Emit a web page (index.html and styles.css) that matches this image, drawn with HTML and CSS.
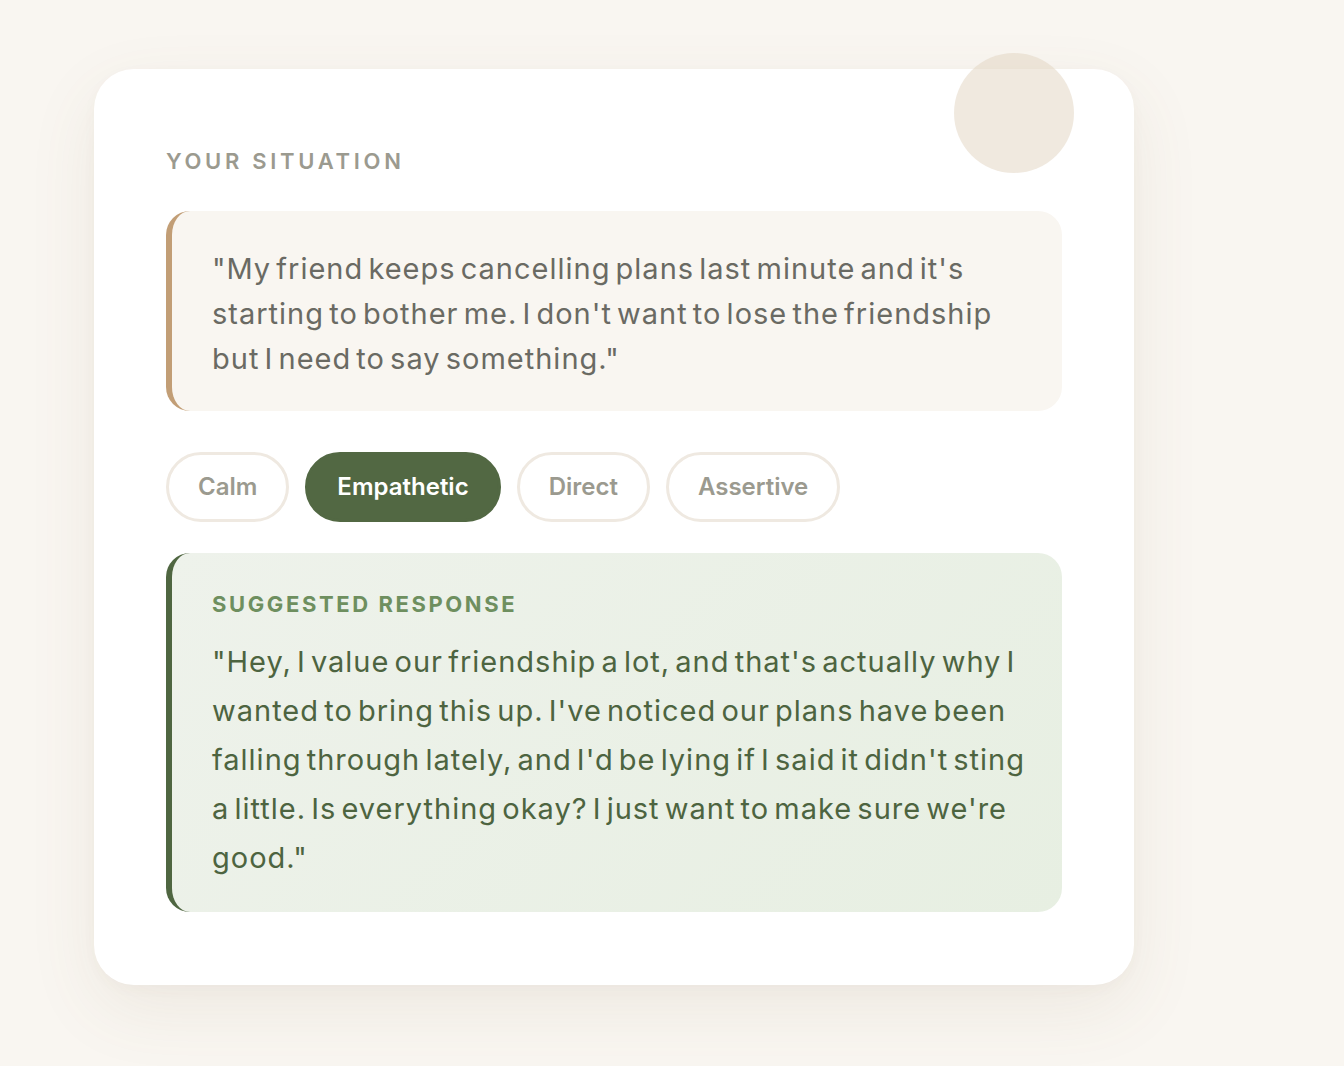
FILE: index.html
```html
<!DOCTYPE html>
<html lang="en">
<head>
<meta charset="utf-8">
<title>Your situation</title>
<link rel="stylesheet" href="styles.css">
</head>
<body>
<main class="page">
  <section class="card">
    <div class="card-dot" aria-hidden="true"></div>
    <h2 class="eyebrow">Your situation</h2>
    <blockquote class="situation">"My friend keeps cancelling plans last minute and it's starting to bother me. I don't want to lose the friendship but I need to say something."</blockquote>
    <div class="tones">
      <button class="tone">Calm</button>
      <button class="tone tone-active">Empathetic</button>
      <button class="tone">Direct</button>
      <button class="tone">Assertive</button>
    </div>
    <div class="response">
      <h3 class="response-label">Suggested response</h3>
      <p class="response-text">"Hey, I value our friendship a lot, and that's actually why I wanted to bring this up. I've noticed our plans have been falling through lately, and I'd be lying if I said it didn't sting a little. Is everything okay? I just want to make sure we're good."</p>
    </div>
  </section>
</main>
</body>
</html>
```
FILE: styles.css
```css
* { box-sizing: border-box; }
html, body { margin: 0; padding: 0; }
body {
  background: #f9f6f1;
  font-family: "Inter", "Noto Sans", sans-serif;
  width: 1344px;
  height: 1066px;
  overflow: hidden;
}
.page {
  padding: 69px 0 0 94px;
}
.card {
  position: relative;
  width: 1040px;
  background: #ffffff;
  border-radius: 40px;
  padding: 72px 72px 73px;
  box-shadow: 0 24px 70px rgba(120, 100, 70, 0.09), 0 4px 14px rgba(120, 100, 70, 0.03);
}
.card-dot {
  position: absolute;
  top: -16px;
  right: 60px;
  width: 120px;
  height: 120px;
  border-radius: 50%;
  background: rgba(226, 212, 192, 0.5);
}
.eyebrow {
  margin: 0 0 30px;
  font-size: 22px;
  line-height: 40px;
  font-weight: 600;
  letter-spacing: 3.7px;
  text-transform: uppercase;
  color: #9b9a8f;
}
.situation {
  margin: 0;
  background: #f9f6f1;
  border-left: 6px solid #c29e76;
  border-radius: 24px;
  padding: 35px 30px 30px 40px;
  font-size: 29px;
  line-height: 45px;
  color: #6a6a63;
  letter-spacing: 1px;
  word-spacing: -4px;
}
.tones {
  display: flex;
  gap: 16px;
  margin: 41px 0 31px;
}
.tone {
  font-family: inherit;
  font-size: 24px;
  font-weight: 600;
  line-height: 32px;
  padding: 16px 29px;
  border: 3px solid #efe9e1;
  border-radius: 999px;
  background: #ffffff;
  color: #9b9a8f;
  letter-spacing: 0;
}
.tone-active {
  background: #526843;
  border-color: #526843;
  color: #ffffff;
}
.response {
  background: linear-gradient(135deg, #eef2eb 0%, #e7efe2 100%);
  border-left: 6px solid #4f6641;
  border-radius: 24px;
  padding: 34px 30px 30px 40px;
}
.response-label {
  margin: 0 0 16px;
  font-size: 22px;
  line-height: 34px;
  font-weight: 700;
  letter-spacing: 2.6px;
  text-transform: uppercase;
  color: #6e8f5f;
}
.response-text {
  margin: 0;
  font-size: 29px;
  line-height: 49px;
  color: #4d6440;
  letter-spacing: 1px;
  word-spacing: -4px;
}
```
